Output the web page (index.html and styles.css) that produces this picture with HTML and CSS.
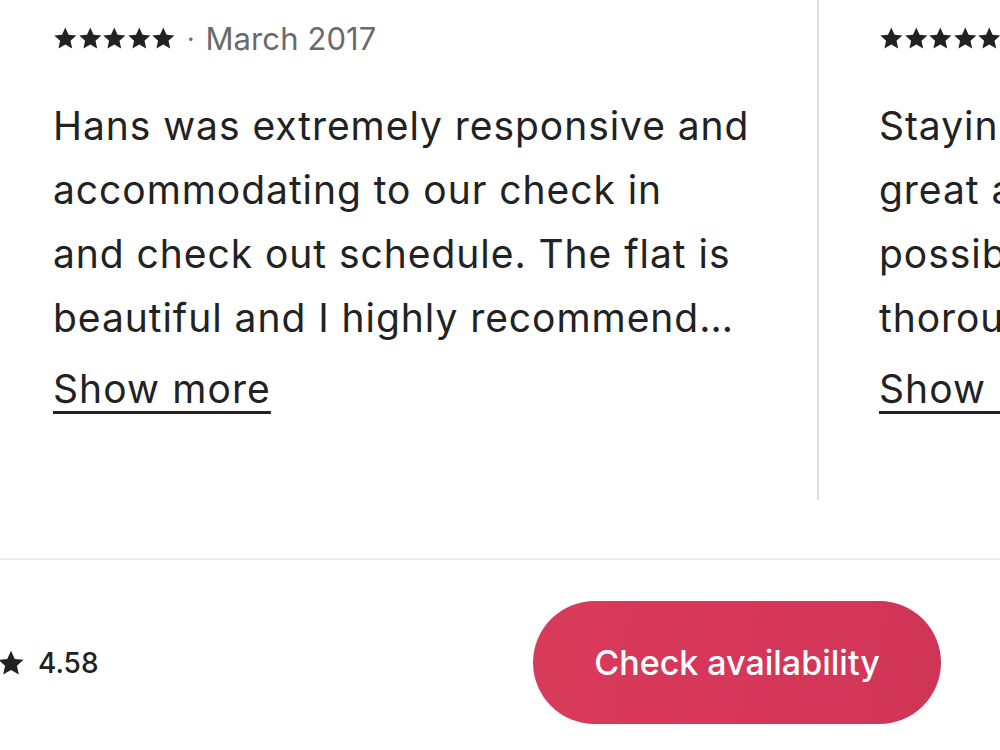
FILE: index.html
```html
<!DOCTYPE html>
<html>
<head>
<meta charset="utf-8">
<link rel="stylesheet" href="styles.css">
</head>
<body>
<main class="page">
  <section class="reviews">
    <article class="review">
      <div class="review-meta">
        <span class="stars">
          <svg viewBox="0 0 24 24"><path d="M12 1.5l3.2 7 7.6.8-5.7 5.1 1.6 7.5L12 18l-6.7 3.9 1.6-7.5-5.7-5.1 7.6-.8z"/></svg>
          <svg viewBox="0 0 24 24"><path d="M12 1.5l3.2 7 7.6.8-5.7 5.1 1.6 7.5L12 18l-6.7 3.9 1.6-7.5-5.7-5.1 7.6-.8z"/></svg>
          <svg viewBox="0 0 24 24"><path d="M12 1.5l3.2 7 7.6.8-5.7 5.1 1.6 7.5L12 18l-6.7 3.9 1.6-7.5-5.7-5.1 7.6-.8z"/></svg>
          <svg viewBox="0 0 24 24"><path d="M12 1.5l3.2 7 7.6.8-5.7 5.1 1.6 7.5L12 18l-6.7 3.9 1.6-7.5-5.7-5.1 7.6-.8z"/></svg>
          <svg viewBox="0 0 24 24"><path d="M12 1.5l3.2 7 7.6.8-5.7 5.1 1.6 7.5L12 18l-6.7 3.9 1.6-7.5-5.7-5.1 7.6-.8z"/></svg>
        </span>
        <span class="sep">·</span>
        <span class="date">March 2017</span>
      </div>
      <p class="review-text">Hans was extremely responsive and<br>accommodating to our check in<br>and check out schedule. The flat is<br>beautiful and I highly recommend…</p>
      <a class="more" href="#">Show more</a>
    </article>
    <article class="review">
      <div class="review-meta">
        <span class="stars">
          <svg viewBox="0 0 24 24"><path d="M12 1.5l3.2 7 7.6.8-5.7 5.1 1.6 7.5L12 18l-6.7 3.9 1.6-7.5-5.7-5.1 7.6-.8z"/></svg>
          <svg viewBox="0 0 24 24"><path d="M12 1.5l3.2 7 7.6.8-5.7 5.1 1.6 7.5L12 18l-6.7 3.9 1.6-7.5-5.7-5.1 7.6-.8z"/></svg>
          <svg viewBox="0 0 24 24"><path d="M12 1.5l3.2 7 7.6.8-5.7 5.1 1.6 7.5L12 18l-6.7 3.9 1.6-7.5-5.7-5.1 7.6-.8z"/></svg>
          <svg viewBox="0 0 24 24"><path d="M12 1.5l3.2 7 7.6.8-5.7 5.1 1.6 7.5L12 18l-6.7 3.9 1.6-7.5-5.7-5.1 7.6-.8z"/></svg>
          <svg viewBox="0 0 24 24"><path d="M12 1.5l3.2 7 7.6.8-5.7 5.1 1.6 7.5L12 18l-6.7 3.9 1.6-7.5-5.7-5.1 7.6-.8z"/></svg>
        </span>
        <span class="sep">·</span>
        <span class="date">February 2017</span>
      </div>
      <p class="review-text">Staying here was a<br>great and comfortable stay in every<br>possible way. The flat was clean and<br>thoroughly equipped. Thanks again…</p>
      <a class="more" href="#">Show more</a>
    </article>
  </section>
  <footer class="bar">
    <div class="rating">
      <svg viewBox="0 0 24 24"><path d="M12 1.5l3.2 7 7.6.8-5.7 5.1 1.6 7.5L12 18l-6.7 3.9 1.6-7.5-5.7-5.1 7.6-.8z"/></svg>
      <span>4.58</span>
    </div>
    <button class="cta">Check availability</button>
  </footer>
</main>
</body>
</html>
```
FILE: styles.css
```css
html, body {
  margin: 0;
  padding: 0;
  background: #fff;
}
body {
  width: 1000px;
  height: 750px;
  overflow: hidden;
  font-family: "Inter", "Roboto", sans-serif;
  color: #222;
}
.page {
  display: flex;
  flex-direction: column;
}
.reviews {
  display: flex;
  height: 558px;
  overflow: hidden;
  border-bottom: 2px solid #ebebeb;
}
.review {
  flex: 0 0 auto;
  width: 731px;
  padding: 0 33px 0 53px;
  white-space: nowrap;
}
.review:first-child {
  border-right: 2px solid #dddddd;
  height: 500px;
}
.review + .review {
  padding-left: 60px;
}
.review-meta {
  display: flex;
  align-items: center;
  height: 40px;
  margin-top: 18px;
}
.stars {
  display: flex;
  gap: 0;
}
.stars svg {
  width: 24.6px;
  height: 24.6px;
  fill: #222;
}
.sep {
  color: #6a6a6a;
  font-size: 26px;
  margin: 0 11px 0 11px;
}
.date {
  color: #6a6a6a;
  font-size: 31px;
  letter-spacing: 0.1px;
}
.review-text {
  margin: 36px 0 0;
  font-size: 39px;
  line-height: 64px;
  letter-spacing: 0.95px;
}
.more {
  display: inline-block;
  margin-top: 15px;
  font-size: 39px;
  letter-spacing: 1.1px;
  color: #222;
  text-decoration: underline;
  text-decoration-thickness: 3px;
  text-underline-offset: 8px;
}
.bar {
  display: flex;
  align-items: center;
  justify-content: space-between;
  padding: 41px 59px 0 0;
}
.rating {
  display: flex;
  align-items: center;
  gap: 13px;
  margin-left: -3px;
  font-size: 28px;
  font-weight: 500;
}
.rating svg {
  width: 28px;
  height: 28px;
  fill: #222;
}
.cta {
  width: 408px;
  height: 123px;
  border: 0;
  border-radius: 62px;
  background: linear-gradient(100deg, #d93b5a 0%, #d6375a 50%, #cf3556 100%);
  color: #fff;
  font-family: inherit;
  font-size: 34px;
  font-weight: 500;
}
```
